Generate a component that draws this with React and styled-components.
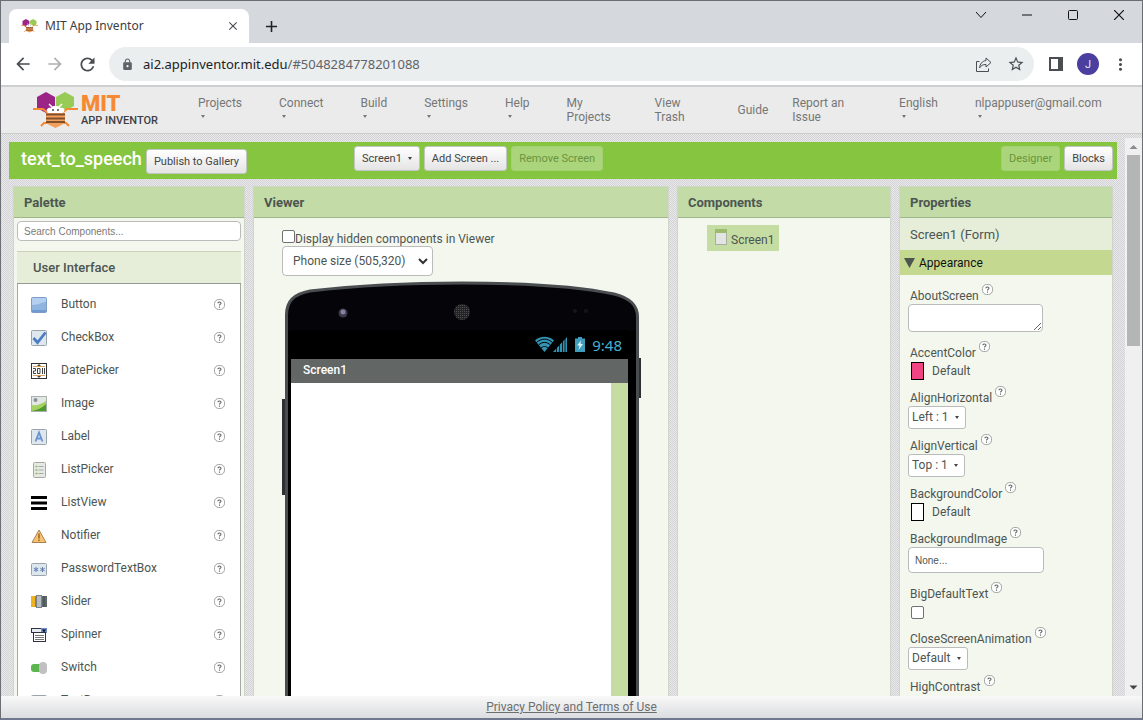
import React, { useState } from "react";
import styled, { createGlobalStyle } from "styled-components";
import { MdArrowBack, MdArrowForward, MdRefresh, MdLock, MdStarBorder, MdMoreVert, MdClose, MdAdd } from "react-icons/md";

const GlobalStyle = createGlobalStyle`
* { box-sizing: border-box; }
body {
    margin: 0;
    font-family: Roboto, "Liberation Sans", sans-serif;
    font-size: 12px;
    line-height: 14px;
    color: #4d5551;
}
button, input, select, textarea {
    font-family: inherit;
    font-size: inherit;
    color: inherit;
    margin: 0;
}
`;

/* ---------- browser window ---------- */
const StyledWindow = styled.div`
display: flex;
flex-direction: column;
height: 100vh;
border: 1px solid #6b6e73;
border-bottom: 2px solid #70788f;
overflow: hidden;
`;
const StyledTabStrip = styled.div`
display: flex;
align-items: flex-end;
flex: 0 0 42px;
padding-left: 8px;
background: #d5d9de;
`;
const StyledTab = styled.div`
display: flex;
align-items: center;
gap: 7px;
width: 240px;
height: 34px;
padding: 0 8px 0 12px;
border-radius: 8px 8px 0 0;
background: #fff;
color: #3c4043;
font-family: "Noto Sans", sans-serif;
font-size: 12px;
`;
const StyledTabTitle = styled.span`
flex: 1;
`;
const StyledIconButton = styled.button`
display: flex;
align-items: center;
justify-content: center;
width: ${(p) => p.$w || 32}px;
height: ${(p) => p.$h || 32}px;
padding: 0;
border: none;
background: none;
color: ${(p) => p.$color || "#4a4d51"};
`;
const StyledWindowButtons = styled.div`
display: flex;
align-self: flex-start;
margin-left: auto;
`;
const StyledToolbar = styled.div`
display: flex;
align-items: center;
flex: 0 0 44px;
padding: 0 6px;
background: #fff;
border-bottom: 2px solid #cdcfd0;
`;
const StyledAddress = styled.div`
display: flex;
align-items: center;
flex: 1;
height: 34px;
margin: 0 6px;
padding: 0 2px 0 12px;
border-radius: 17px;
background: #ebeeef;
color: #5f6368;
& svg { flex: none; }
`;
const StyledUrl = styled.span`
flex: 1;
margin-left: 9px;
font-family: "Noto Sans", sans-serif;
font-size: 13px;
& b { font-weight: 400; color: #202124; }
`;
const StyledAvatar = styled.button`
width: 22px;
height: 22px;
margin: 0 5px;
padding: 0;
border: none;
border-radius: 50%;
background: #4a3f9f;
color: #e8e6f5;
font-size: 11px;
`;

/* ---------- app header ---------- */
const StyledHeader = styled.header`
display: flex;
align-items: center;
flex: 0 0 47px;
padding-left: 32px;
background: #ebebeb;
border-bottom: 1px solid #c9cfc6;
color: #757777;
`;
const StyledLogo = styled.div`
display: flex;
align-items: center;
gap: 3px;
width: 165px;
`;
const StyledLogoText = styled.div`
display: flex;
flex-direction: column;
font-weight: 500;
font-size: 11px;
line-height: 13px;
color: #3e4143;
white-space: nowrap;
& strong {
    color: #f68a33;
    font-size: 22px;
    font-weight: 900;
    line-height: 20px;
}
`;
const StyledMenuButton = styled.button`
flex: none;
height: 28px;
margin-right: 37px;
padding: 0;
border: none;
background: none;
line-height: 14px;
text-align: left;
& svg { display: block; margin: 5px 0 6px 3px; }
`;
const StyledMenuLink = styled.a`
flex: none;
margin-right: ${(p) => p.$gap}px;
color: inherit;
text-decoration: none;
white-space: pre;
`;

/* ---------- work area ---------- */
const StyledWork = styled.div`
display: flex;
flex: 1;
min-height: 0;
padding-top: 4px;
background: repeating-conic-gradient(#d3d3d7 0 25%, #e9e9ea 0 50%) 0 0 / 2px 2px;
`;
const StyledContent = styled.main`
flex: 1;
min-width: 0;
padding: 4px 8px 0;
overflow: hidden;
`;
const StyledProjectBar = styled.div`
display: flex;
align-items: flex-start;
gap: 4px;
height: 37px;
padding: 4px 4px 0 12px;
background: #86c540;
`;
const StyledProjectTitle = styled.div`
display: flex;
align-items: flex-start;
gap: 4px;
width: 329px;
color: #fff;
font-size: 18px;
font-weight: 500;
line-height: 26px;
& button { margin-top: 3px; }
`;
const StyledButton = styled.button`
display: flex;
align-items: center;
gap: 6px;
height: 25px;
padding: 0 7px;
border: 1px solid #c2c6c2;
border-radius: 3px;
background: linear-gradient(#fff, #e4e4e4);
color: #444;
font-size: 11px;
line-height: 14px;
white-space: nowrap;
&:disabled {
    border-color: #a5d073;
    background: #aad57a;
    color: #6a9440;
}
`;
const StyledSpacer = styled.div`
flex: 1;
`;
const StyledPanels = styled.div`
display: flex;
align-items: stretch;
gap: 10px;
padding: 8px 5px 0;
`;
const StyledPanel = styled.section`
flex: ${(p) => (p.$w ? `0 0 ${p.$w}px` : "1")};
min-width: 0;
background: #f3f7ee;
box-shadow: 0 0 0 1px #cfd4cb;
`;
const StyledPanelTitle = styled.h2`
margin: 0;
padding: 8px 10px;
height: 31px;
border-bottom: 1px solid #9fb58c;
background: #c2dba7;
font-size: 13px;
font-weight: 700;
line-height: 15px;
`;

/* ---------- palette ---------- */
const StyledSearch = styled.input`
display: block;
width: calc(100% - 6px);
height: 20px;
margin: 3px 3px 10px;
padding: 0 6px;
border: 1px solid #bcbcbc;
border-radius: 4px;
background: #fff;
font-family: "Liberation Sans", sans-serif;
font-size: 10px;
&::placeholder { color: #7a7a7a; opacity: 1; }
`;
const StyledSection = styled.h3`
margin: 0 3px;
padding: 8px 16px;
height: 33px;
border-top: 1px solid #c8d3ba;
border-bottom: 1px solid #939c8f;
background: #e6edd8;
font-size: 13px;
font-weight: 500;
line-height: 16px;
`;
const StyledList = styled.ul`
list-style: none;
margin: 0 3px;
padding: 4px 0 0;
border: solid #a5aaa2;
border-width: 0 1px;
background: #fff;
`;
const StyledListItem = styled.li`
display: flex;
align-items: center;
height: 33px;
padding: 0 15px 0 13px;
& svg { flex: none; }
& span { flex: 1; margin-left: 14px; padding-bottom: 2px; }
`;

/* ---------- viewer ---------- */
const StyledViewer = styled.div`
padding: 12px 27px 0 28px;
`;
const StyledCheckLabel = styled.label`
display: flex;
align-items: flex-end;
height: 16px;
& input { align-self: flex-start; }
`;
const StyledCheckbox = styled.input`
appearance: none;
width: 13px;
height: 13px;
border: 1px solid #6f7270;
border-radius: 2px;
background: #fff;
`;
const chevron = `url("data:image/svg+xml,%3Csvg xmlns='http://www.w3.org/2000/svg' width='10' height='8'%3E%3Cpath d='M1 2l4 4 4-4' fill='none' stroke='%23333' stroke-width='2'/%3E%3C/svg%3E")`;
const caret = `url("data:image/svg+xml,%3Csvg xmlns='http://www.w3.org/2000/svg' width='4' height='3'%3E%3Cpath d='M0 0h4L2 3z' fill='%23444'/%3E%3C/svg%3E")`;
const StyledSizeSelect = styled.select`
appearance: none;
display: block;
width: 151px;
height: 30px;
margin-bottom: 5px;
padding: 0 10px;
border: 1px solid #bbb;
border-radius: 4px;
background: #fff ${chevron} no-repeat right 4px center;
`;
const StyledPhone = styled.div`
position: relative;
width: 359px;
height: 500px;
padding: 49px 13px 0 9px;
& > svg { position: absolute; left: 0; top: 0; }
`;
const StyledScreen = styled.div`
position: relative;
display: flex;
flex-direction: column;
height: 100%;
`;
const StyledStatusBar = styled.div`
display: flex;
align-items: center;
justify-content: flex-end;
height: 29px;
padding-right: 6px;
background: #000;
color: #46b0d0;
font-family: "Noto Sans", sans-serif;
font-size: 15px;
& svg { margin-right: 6px; }
`;
const StyledScreenTitle = styled.div`
height: 24px;
padding: 4px 12px;
background: #626665;
color: #fff;
font-weight: 500;
`;
const StyledScreenBody = styled.div`
flex: 1;
border-right: 17px solid #c5dda3;
background: #fff;
`;

/* ---------- components ---------- */
const StyledTreeItem = styled.button`
display: flex;
align-items: center;
gap: 4px;
height: 26px;
margin: 7px 0 0 29px;
padding: 0 5px 0 8px;
border: none;
background: #c5dda3;
& svg { margin-bottom: 3px; }
& span { padding-top: 3px; }
`;

/* ---------- properties ---------- */
const StyledFormName = styled.div`
height: 32px;
padding: 10px;
background: #e6edd8;
font-size: 13px;
`;
const StyledCategory = styled.button`
display: flex;
align-items: center;
gap: 4px;
width: 100%;
height: 25px;
padding: 0 4px;
border: none;
background: #c5d890;
color: #111;
`;
const StyledProps = styled.div`
display: flex;
flex-direction: column;
gap: 5px;
padding: 9px 8px;
`;
const StyledPropLabel = styled.label`
display: flex;
gap: 3px;
height: 20px;
padding-left: 2px;
& span { align-self: flex-end; padding-bottom: 1px; }
`;
const StyledTextarea = styled.textarea`
display: block;
width: 135px;
height: 28px;
margin-bottom: 4px;
border: 1px solid #bbb;
border-radius: 4px;
background: #fff;
`;
const StyledAsset = styled.input`
display: block;
width: 136px;
height: 26px;
margin-bottom: 4px;
padding: 0 6px;
border: 1px solid #bbb;
border-radius: 4px;
background: #fff;
font-family: "Liberation Sans", sans-serif;
font-size: 10px;
`;
const StyledColorButton = styled.button`
display: flex;
align-items: center;
gap: 8px;
height: 20px;
padding: 0 3px;
border: none;
background: none;
&::before {
    content: "";
    width: 11px;
    height: 16px;
    border: 1px solid #000;
    background: ${(p) => p.$color};
}
`;
const StyledSmallSelect = styled.select`
appearance: none;
display: block;
height: 23px;
padding: 0 16px 1px 3px;
border: 1px solid #bbb;
border-radius: 3px;
background: #fff ${caret} no-repeat right 6px center;
`;
const StyledCheckRow = styled.div`
display: flex;
align-items: center;
height: 20px;
padding-left: 3px;
`;

/* ---------- scroll bar and footer ---------- */
const StyledScrollbar = styled.div`
display: flex;
flex-direction: column;
align-items: center;
width: 17px;
background: #f0f0f0;
& svg { flex: none; }
`;
const StyledThumb = styled.div`
width: 13px;
height: 191px;
margin-bottom: auto;
background: #b4b6b6;
`;
const StyledFooter = styled.footer`
flex: 0 0 22px;
padding-top: 4px;
background: linear-gradient(#f8f8f8, #dcdde0);
text-align: center;
& a { color: #6c6e70; }
`;

/* ---------- drawings ---------- */
const Bee = ({ size }) => (
    <svg width={size} height={size * 36 / 45} viewBox="0 0 45 36">
        <path d="M4 5L13 0l9 5v11l-9 5-9-5z" fill="#9b2486" />
        <path d="M23 5L32 0l9 5v9l-9 5-9-5z" fill="#97cb56" />
        <path d="M0 17h10l5 4M45 17H34l-5 4M8 34l3-3h5M36 34l-3-3h-5" stroke="#f68a33" strokeWidth="2" fill="none" />
        <path d="M13 21h19v9c0 2-6 4-9.500 6C19 34 13 32 13 30z" fill="#f3a05c" />
        <path d="M13 22.500h19M13 26.500h19M13 30h19" stroke="#80502c" strokeWidth="2" />
        <path d="M15 21c-3-3 0-6 3-5 1-3 8-3 9 0 4-1 6 2 3 5z" fill="#fff" />
        <path d="M19 15l-3-3M26 15l3-3" stroke="#fff" strokeWidth="1.500" />
        <circle cx="20" cy="18" r="1" fill="#444" />
        <circle cx="25" cy="18" r="1" fill="#444" />
    </svg>
);

const Caret = () => (
    <svg width="4" height="3" viewBox="0 0 4 3"><path d="M0 0h4L2 3z" fill="currentColor" /></svg>
);

const Help = () => (
    <svg width="11" height="11" viewBox="0 0 11 11">
        <rect x=".5" y=".5" width="10" height="10" rx="4.200" fill="#fff" stroke="#a0a3a1" />
        <path d="M4 4.300c0-1.800 3-1.700 3 0 0 1-1.500 1-1.500 2.100M5.500 7.500v1.200" fill="none" stroke="#666" strokeWidth="1.100" />
    </svg>
);

const box = <rect x=".5" y=".5" width="15" height="15" rx="1" fill="#dfe7ee" stroke="#9aa4ac" />;

const icons = {
    Button: (
        <>
            <rect x=".5" y=".5" width="15" height="15" rx="1" fill="#8fb4e0" stroke="#7c9cc6" />
            <path d="M1 1h14v4c-6 0-5 3-14 3z" fill="#b4cff0" />
            <path d="M1 13h14v2H1z" fill="#719bd0" />
        </>
    ),
    CheckBox: <>{box}<path d="M2.500 8l4 4.500 8-10" fill="none" stroke="#4b7dc4" strokeWidth="2.800" /></>,
    DatePicker: (
        <>
            <rect x=".5" y=".5" width="15" height="15" fill="#fff" stroke="#333" />
            <path d="M2 3.500h12M2 12.500h12" stroke="#d9a35c" />
            <path d="M6 3l2-2 2 2zM6 13l2 2 2-2z" fill="#444" />
            <path d="M2 5.500h2.500v2.500H2.500v2.500h2.500M6.500 5.500h2.500v5H6.500zM11.500 5v6M13.500 5v6" fill="none" stroke="#444" />
        </>
    ),
    Image: (
        <>
            <rect x=".5" y=".5" width="15" height="15" fill="#e2e7e4" stroke="#a8b0aa" />
            <circle cx="4.500" cy="4" r="2" fill="#8b8f9c" />
            <path d="M1 9c5 1 9-1 14-4v10H1z" fill="#a5d263" />
            <path d="M1 15c5-1 10-3 14-7v7z" fill="#4f9a2c" />
        </>
    ),
    Label: <>{box}<path d="M4.500 12.500L8 3.500l3.500 9M5.700 9.500h4.600" fill="none" stroke="#6a92cf" strokeWidth="1.800" /></>,
    ListPicker: (
        <>
            <rect x="2.500" y=".5" width="12" height="15" rx="1" fill="#e6e9e3" stroke="#a3a8a2" />
            <path d="M4.500 4.500h2M4.500 8h2M4.500 11.500h2" stroke="#8cb860" strokeWidth="1.500" />
            <path d="M7.500 4.500h5M7.500 8h5M7.500 11.500h5" stroke="#a7aaa6" />
        </>
    ),
    ListView: <path d="M0 2.500h16M0 8h16M0 13.500h16" stroke="#000" strokeWidth="3" />,
    Notifier: (
        <>
            <path d="M8 2l7 12.500H1z" fill="#f6c173" stroke="#a98450" />
            <path d="M8 5.500v5M8 11.500v1.500" stroke="#a3621c" strokeWidth="1.500" />
        </>
    ),
    PasswordTextBox: (
        <>
            <rect x=".5" y="2.500" width="15" height="12" rx="1" fill="#dfe7ee" stroke="#9aa4ac" />
            <path d="M5 6v5M2.800 7.200l4.400 2.600M7.200 7.200l-4.400 2.600M11.500 6v5M9.300 7.200l4.400 2.600M13.700 7.200l-4.400 2.600" stroke="#627fb0" />
        </>
    ),
    Slider: (
        <>
            <path d="M0 2h6v11H0z" fill="#efb31f" />
            <path d="M10 2h6v11h-6z" fill="#5f686a" />
            <path d="M13 2v11" stroke="#434a4c" />
            <path d="M4.500 2v11" stroke="#a77c1b" />
            <rect x="5.500" y="1.500" width="5" height="12" fill="#b5bcc4" stroke="#7b8288" />
        </>
    ),
    Spinner: (
        <>
            <rect x=".5" y="1.500" width="15" height="4" fill="#e8ebf2" stroke="#30343a" />
            <path d="M10 1h6v5h-6z" fill="#6e8ccd" />
            <path d="M11 2.500h4l-2 3z" fill="#111" />
            <rect x="2.500" y="5.500" width="12" height="9" fill="#fff" stroke="#30343a" />
            <path d="M4 8.500h9M4 10.500h9M4 12.500h9" stroke="#777" />
        </>
    ),
    Switch: (
        <>
            <rect x="0" y="4" width="14" height="8" rx="3" fill="#5db54f" />
            <rect x="8" y="2" width="8" height="12" rx="4" fill="#c2bfc2" />
        </>
    ),
    TextBox: <><rect x=".5" y="2.500" width="15" height="12" rx="1" fill="#dfe7ee" stroke="#9aa4ac" /></>,
};

const PaletteIcon = ({ name }) => (
    <svg width="16" height="16" viewBox="0 0 16 16">{icons[name]}</svg>
);

const PhoneFrame = () => (
    <svg width="360" height="500" viewBox="0 0 360 500">
        <defs>
            <pattern id="mesh" width="2" height="2" patternUnits="userSpaceOnUse">
                <rect width="2" height="2" fill="#242426" />
                <rect width="1" height="1" fill="#4c4c4e" />
            </pattern>
        </defs>
        <path d="M0 118h4v96H0zM356 77h3v40h-3z" fill="#2d2f33" />
        <path d="M4.500 510V34C4.500 20 12 13 28 10 80 4 130 2 180 2S290 4 332 13C348 17 355.500 24 355.500 36V510" fill="#050509" stroke="#4a4d50" strokeWidth="3" />
        <path d="M6 50h348v460H6z" fill="#000" />
        <circle cx="61" cy="32" r="4.500" fill="#3b3948" />
        <circle cx="61" cy="31" r="2.500" fill="#8583a0" />
        <circle cx="180" cy="31" r="8" fill="url(#mesh)" />
        <circle cx="293" cy="30" r="2" fill="#15151a" />
        <circle cx="304" cy="30" r="2" fill="#15151a" />
    </svg>
);

const StatusIcons = () => (
    <svg width="51" height="17" viewBox="0 0 51 17">
        <path d="M0 4.500C5-.5 14-.5 19 4.500L9.500 16z" fill="#3393b3" />
        <path d="M1.500 6.500c5-4.500 11-4.500 16 0M3.500 9c4-3.500 8-3.500 12 0M6 12c2-2 5-2 7 0" fill="none" stroke="#000" strokeWidth="1" />
        <path d="M18 16L32 1v15z" fill="#3393b3" />
        <path d="M21.500 8v8M24.500 6v10M27.500 3v13M30 1v15" stroke="#000" strokeWidth=".8" />
        <path d="M40 2.500h3V1h4v1.500h3V16H40z" fill="#3f9dbb" />
        <path d="M46 4.500l-4 5h2.500l-1 4.500 4.500-6h-2.500z" fill="#d9f3fb" />
    </svg>
);

const paletteItems = ["Button", "CheckBox", "DatePicker", "Image", "Label", "ListPicker", "ListView", "Notifier", "PasswordTextBox", "Slider", "Spinner", "Switch", "TextBox"];

const menuItems = [
    { name: "Projects" },
    { name: "Connect" },
    { name: "Build" },
    { name: "Settings" },
    { name: "Help" },
    { name: "My\nProjects", href: "#projects", gap: 44 },
    { name: "View\nTrash", href: "#trash", gap: 53 },
    { name: "Guide", href: "#guide", gap: 24 },
    { name: "Report an\nIssue", href: "#issue", gap: 55 },
    { name: "English" },
    { name: "nlpappuser@gmail.com" },
];

const properties = [
    { name: "AboutScreen", type: "textarea" },
    { name: "AccentColor", type: "color", color: "#f14482" },
    { name: "AlignHorizontal", type: "select", value: "Left : 1" },
    { name: "AlignVertical", type: "select", value: "Top : 1" },
    { name: "BackgroundColor", type: "color", color: "#fff" },
    { name: "BackgroundImage", type: "asset" },
    { name: "BigDefaultText", type: "checkbox" },
    { name: "CloseScreenAnimation", type: "select", value: "Default" },
    { name: "HighContrast", type: "checkbox" },
];

const PropertyEditor = ({ item }) => {
    switch (item.type) {
        case "textarea":
            return <StyledTextarea id={item.name} />;
        case "color":
            return <StyledColorButton id={item.name} $color={item.color}>Default</StyledColorButton>;
        case "asset":
            return <StyledAsset id={item.name} defaultValue="None..." />;
        case "select":
            return <StyledSmallSelect id={item.name}><option>{item.value}</option></StyledSmallSelect>;
        default:
            return <StyledCheckRow><StyledCheckbox type="checkbox" id={item.name} /></StyledCheckRow>;
    }
};

const Browser = () => (
    <>
        <StyledTabStrip>
            <StyledTab>
                <Bee size={17} />
                <StyledTabTitle>MIT App Inventor</StyledTabTitle>
                <StyledIconButton $w={16} $h={16} aria-label="Close tab"><MdClose size={14} /></StyledIconButton>
            </StyledTab>
            <StyledIconButton $w={44} $h={34} $color="#222" aria-label="New tab"><MdAdd size={19} /></StyledIconButton>
            <StyledWindowButtons>
                <StyledIconButton $w={46} $h={28} $color="#111" aria-label="Search tabs">
                    <svg width="12" height="8" viewBox="0 0 12 8"><path d="M1 1l5 5.500L11 1" fill="none" stroke="currentColor" /></svg>
                </StyledIconButton>
                <StyledIconButton $w={46} $h={28} $color="#111" aria-label="Minimize">
                    <svg width="10" height="2" viewBox="0 0 10 2"><path d="M0 1h10" stroke="currentColor" /></svg>
                </StyledIconButton>
                <StyledIconButton $w={46} $h={28} $color="#111" aria-label="Maximize">
                    <svg width="10" height="10" viewBox="0 0 10 10"><rect x=".5" y=".5" width="9" height="9" rx="1" fill="none" stroke="currentColor" /></svg>
                </StyledIconButton>
                <StyledIconButton $w={46} $h={28} $color="#111" aria-label="Close">
                    <svg width="10" height="10" viewBox="0 0 10 10"><path d="M0 0l10 10M10 0L0 10" stroke="currentColor" strokeWidth="1.200" /></svg>
                </StyledIconButton>
            </StyledWindowButtons>
        </StyledTabStrip>
        <StyledToolbar>
            <StyledIconButton aria-label="Back"><MdArrowBack size={20} /></StyledIconButton>
            <StyledIconButton $color="#aeb0b2" aria-label="Forward"><MdArrowForward size={20} /></StyledIconButton>
            <StyledIconButton aria-label="Reload"><MdRefresh size={21} /></StyledIconButton>
            <StyledAddress>
                <MdLock size={13} />
                <StyledUrl><b>ai2.appinventor.mit.edu</b>/#5048284778201088</StyledUrl>
                <StyledIconButton aria-label="Share">
                    <svg width="16" height="15" viewBox="0 0 16 15">
                        <path d="M3.500 4.500h-3v10h12v-3" fill="none" stroke="currentColor" />
                        <path d="M10 1l5 4.500-5 4.500V7.500C7 7.300 5 8.500 3.500 11 4 7 6 4 10 3.600z" fill="none" stroke="currentColor" />
                    </svg>
                </StyledIconButton>
                <StyledIconButton aria-label="Bookmark"><MdStarBorder size={18} /></StyledIconButton>
            </StyledAddress>
            <StyledIconButton aria-label="Side panel">
                <svg width="14" height="14" viewBox="0 0 14 14"><path d="M0 0h14v14H0zM2 2v10h7V2z" fillRule="evenodd" fill="currentColor" /></svg>
            </StyledIconButton>
            <StyledAvatar>J</StyledAvatar>
            <StyledIconButton aria-label="Menu"><MdMoreVert size={19} /></StyledIconButton>
        </StyledToolbar>
    </>
);

const App = () => {
    const [search, setSearch] = useState("");
    const [hidden, setHidden] = useState(false);
    return (
        <StyledWindow>
            <GlobalStyle />
            <Browser />
            <StyledHeader>
                <StyledLogo>
                    <Bee size={45} />
                    <StyledLogoText><strong>MIT</strong>APP INVENTOR</StyledLogoText>
                </StyledLogo>
                {menuItems.map((item) => (
                    item.href ?
                        <StyledMenuLink key={item.name} href={item.href} $gap={item.gap}>{item.name}</StyledMenuLink> :
                        <StyledMenuButton key={item.name}>{item.name}<Caret /></StyledMenuButton>
                ))}
            </StyledHeader>
            <StyledWork>
                <StyledContent>
                    <StyledProjectBar>
                        <StyledProjectTitle>
                            text_to_speech
                            <StyledButton>Publish to Gallery</StyledButton>
                        </StyledProjectTitle>
                        <StyledButton>Screen1 <Caret /></StyledButton>
                        <StyledButton>Add Screen ...</StyledButton>
                        <StyledButton disabled>Remove Screen</StyledButton>
                        <StyledSpacer />
                        <StyledButton disabled>Designer</StyledButton>
                        <StyledButton>Blocks</StyledButton>
                    </StyledProjectBar>
                    <StyledPanels>
                        <StyledPanel $w={230}>
                            <StyledPanelTitle>Palette</StyledPanelTitle>
                            <StyledSearch
                                aria-label="Search Components"
                                placeholder="Search Components..."
                                value={search}
                                onChange={(e) => setSearch(e.target.value)}
                            />
                            <StyledSection>User Interface</StyledSection>
                            <StyledList>
                                {paletteItems.map((name) => (
                                    <StyledListItem key={name}>
                                        <PaletteIcon name={name} />
                                        <span>{name}</span>
                                        <Help />
                                    </StyledListItem>
                                ))}
                            </StyledList>
                        </StyledPanel>
                        <StyledPanel>
                            <StyledPanelTitle>Viewer</StyledPanelTitle>
                            <StyledViewer>
                                <StyledCheckLabel>
                                    <StyledCheckbox type="checkbox" checked={hidden} onChange={() => setHidden(!hidden)} />
                                    Display hidden components in Viewer
                                </StyledCheckLabel>
                                <StyledSizeSelect aria-label="Screen size">
                                    <option>Phone size (505,320)</option>
                                </StyledSizeSelect>
                                <StyledPhone>
                                    <PhoneFrame />
                                    <StyledScreen>
                                        <StyledStatusBar><StatusIcons />9:48</StyledStatusBar>
                                        <StyledScreenTitle>Screen1</StyledScreenTitle>
                                        <StyledScreenBody />
                                    </StyledScreen>
                                </StyledPhone>
                            </StyledViewer>
                        </StyledPanel>
                        <StyledPanel $w={212}>
                            <StyledPanelTitle>Components</StyledPanelTitle>
                            <StyledTreeItem>
                                <svg width="12" height="16" viewBox="0 0 12 16">
                                    <rect x=".5" y=".5" width="11" height="15" fill="#e3e5e2" stroke="#a9ada6" />
                                    <path d="M0 0h12v4H0z" fill="#9dbb6c" />
                                </svg>
                                <span>Screen1</span>
                            </StyledTreeItem>
                        </StyledPanel>
                        <StyledPanel $w={212}>
                            <StyledPanelTitle>Properties</StyledPanelTitle>
                            <StyledFormName>Screen1 (Form)</StyledFormName>
                            <StyledCategory>
                                <svg width="11" height="10" viewBox="0 0 11 10"><path d="M0 0h11L5.500 10z" fill="#4d5551" /></svg>
                                Appearance
                            </StyledCategory>
                            <StyledProps>
                                {properties.map((item) => (
                                    <div key={item.name}>
                                        <StyledPropLabel htmlFor={item.name}><span>{item.name}</span><Help /></StyledPropLabel>
                                        <PropertyEditor item={item} />
                                    </div>
                                ))}
                            </StyledProps>
                        </StyledPanel>
                    </StyledPanels>
                </StyledContent>
                <StyledScrollbar>
                    <svg width="17" height="17" viewBox="0 0 17 17"><path d="M4.500 11h8l-4-4z" fill="#888b8b" /></svg>
                    <StyledThumb />
                    <svg width="17" height="17" viewBox="0 0 17 17"><path d="M4.500 6.500h8l-4 4z" fill="#444" /></svg>
                </StyledScrollbar>
            </StyledWork>
            <StyledFooter><a href="#privacy">Privacy Policy and Terms of Use</a></StyledFooter>
        </StyledWindow>
    );
};
export default App;
